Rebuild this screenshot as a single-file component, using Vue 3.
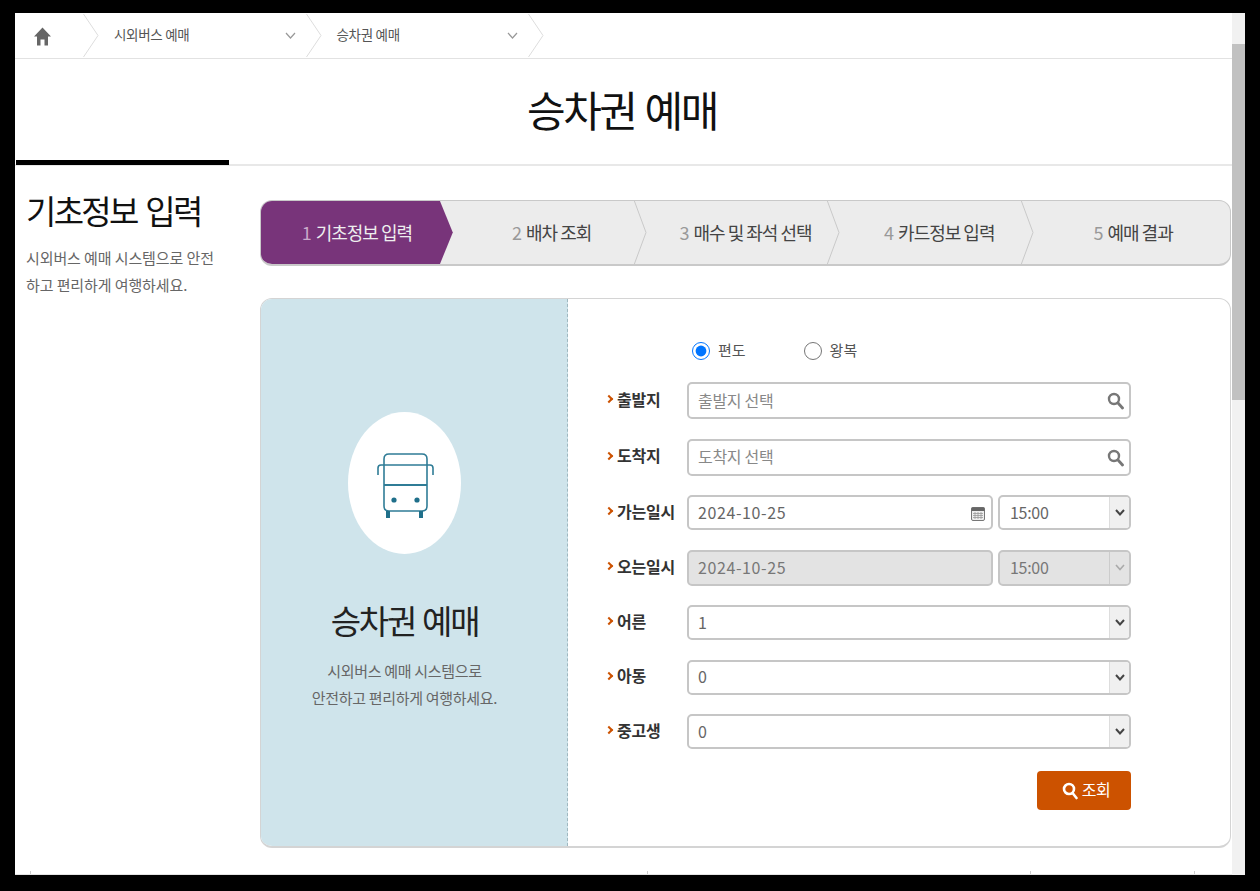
<template>
  <div class="screen">
    <div class="page">
      <!-- 상단 경로 -->
      <nav class="crumbs">
        <a class="crumb-home">
          <svg width="17" height="19" viewBox="0 0 17 19"><path d="M8.5 0.5 L17 9.5 H14 V18.5 H10.5 V12.5 H6.5 V18.5 H3 V9.5 H0 Z" fill="#666" /></svg>
        </a>
        <svg class="crumb-sep" width="16" height="45" viewBox="0 0 16 45"><path d="M0.5 1 L15 22.5 L0.5 44" fill="none" stroke="#ddd" /></svg>
        <template v-for="c in crumbs" :key="c">
          <a class="crumb">
            <span>{{ c }}</span>
            <svg width="11" height="7" viewBox="0 0 11 7"><path d="M1 1 L5.5 6 L10 1" fill="none" stroke="#999" stroke-width="1.2" /></svg>
          </a>
          <svg class="crumb-sep" width="16" height="45" viewBox="0 0 16 45"><path d="M0.5 1 L15 22.5 L0.5 44" fill="none" stroke="#ddd" /></svg>
        </template>
      </nav>

      <header class="title-bar">
        <h1>승차권 예매</h1>
        <div class="title-mark"></div>
      </header>

      <div class="content">
        <aside class="side">
          <h2>기초정보 입력</h2>
          <p>시외버스 예매 시스템으로 안전하고 편리하게 여행하세요.</p>
        </aside>

        <main class="body">
          <ol class="steps">
            <li v-for="(s, i) in steps" :key="s" class="step" :class="{ on: i === 0 }">
              <span class="num">{{ i + 1 }}</span> <span>{{ s }}</span>
              <svg v-if="i > 0 && i < 4" class="step-arrow" width="14" height="65" viewBox="0 0 14 65"><path d="M1 0 L13 32.5 L1 65" fill="none" stroke="#c9c9c9" /></svg>
            </li>
          </ol>

          <section class="card">
            <div class="intro">
              <div class="bus-circle">
                <svg class="bus" width="57" height="66" viewBox="0 0 57 66">
                  <g fill="none" stroke="#2f7c96" stroke-width="1.6">
                    <path d="M7 12 V6 Q7 1 12 1 H45 Q50 1 50 6 V53 Q50 58 45 58 H12 Q7 58 7 53 Z" />
                    <path d="M7 32 H50" stroke-width="2.2" />
                    <path d="M1 22 V15 Q1 12 4 12 H53 Q56 12 56 15 V22" />
                  </g>
                  <circle cx="17" cy="47" r="2.6" fill="#1f6f8a" />
                  <circle cx="40" cy="47" r="2.6" fill="#1f6f8a" />
                  <rect x="9" y="58" width="4" height="7" fill="#1f6f8a" />
                  <rect x="42" y="58" width="4" height="7" fill="#1f6f8a" />
                </svg>
              </div>
              <h3>승차권 예매</h3>
              <p>시외버스 예매 시스템으로<br />안전하고 편리하게 여행하세요.</p>
            </div>

            <form class="form" @submit.prevent>
              <div class="trip">
                <label class="trip-opt"><input type="radio" name="trip" checked /> <span>편도</span></label>
                <label class="trip-opt"><input type="radio" name="trip" /> <span>왕복</span></label>
              </div>

              <div class="row tall">
                <label>출발지</label>
                <div class="field">
                  <input type="text" placeholder="출발지 선택" />
                  <svg class="lens" width="17" height="18" viewBox="0 0 17 18"><circle cx="7" cy="7" r="5" fill="none" stroke="#777" stroke-width="2.4" /><path d="M11 11 L15.5 16" stroke="#777" stroke-width="2.8" stroke-linecap="round" /></svg>
                </div>
              </div>
              <div class="row tall">
                <label>도착지</label>
                <div class="field">
                  <input type="text" placeholder="도착지 선택" />
                  <svg class="lens" width="17" height="18" viewBox="0 0 17 18"><circle cx="7" cy="7" r="5" fill="none" stroke="#777" stroke-width="2.4" /><path d="M11 11 L15.5 16" stroke="#777" stroke-width="2.8" stroke-linecap="round" /></svg>
                </div>
              </div>
              <div class="row">
                <label>가는일시</label>
                <div class="field">
                  <input type="text" value="2024-10-25" />
                  <svg class="cal" width="14" height="15" viewBox="0 0 14 15">
                    <rect x="0.5" y="1.5" width="13" height="13" rx="1.5" fill="#eee" stroke="#777" />
                    <rect x="0.5" y="1.5" width="13" height="3.5" fill="#666" />
                    <path d="M2 7.5 H12 M2 9.5 H12 M2 11.5 H12 M4 6 V13 M7 6 V13 M10 6 V13" stroke="#999" stroke-width="0.8" />
                  </svg>
                </div>
                <div class="field pick time">
                  <select><option>15:00</option></select>
                  <span class="caret"><svg width="10" height="7" viewBox="0 0 10 7"><path d="M1 1 L5 5.5 L9 1" fill="none" stroke="#444" stroke-width="2" /></svg></span>
                </div>
              </div>
              <div class="row mid">
                <label>오는일시</label>
                <div class="field off">
                  <input type="text" value="2024-10-25" disabled />
                </div>
                <div class="field pick time off">
                  <select disabled><option>15:00</option></select>
                  <span class="caret"><svg width="10" height="7" viewBox="0 0 10 7"><path d="M1 1 L5 5.5 L9 1" fill="none" stroke="#aaa" stroke-width="1.6" /></svg></span>
                </div>
              </div>
              <div v-for="p in people" :key="p.label" class="row">
                <label>{{ p.label }}</label>
                <div class="field pick">
                  <select><option>{{ p.value }}</option></select>
                  <span class="caret"><svg width="10" height="7" viewBox="0 0 10 7"><path d="M1 1 L5 5.5 L9 1" fill="none" stroke="#444" stroke-width="2" /></svg></span>
                </div>
              </div>

              <div class="actions">
                <button type="submit">
                  <svg width="16" height="18" viewBox="0 0 16 18"><circle cx="7" cy="7" r="5" fill="none" stroke="#fff" stroke-width="2.6" /><path d="M10.5 11 L14.5 16" stroke="#fff" stroke-width="2.6" stroke-linecap="round" /></svg>
                  <span>조회</span>
                </button>
              </div>
            </form>
          </section>
        </main>
      </div>

      <div class="table-edge">
        <span class="tick" v-for="w in ticks" :key="w" :style="{ width: w + 'px' }"></span>
      </div>
    </div>
    <div class="scrollbar"><div class="thumb"></div></div>
  </div>
</template>

<script setup>
const crumbs = ["시외버스 예매", "승차권 예매"];
const steps = ["기초정보 입력", "배차 조회", "매수 및 좌석 선택", "카드정보 입력", "예매 결과"];
const people = [
  { label: "어른", value: "1" },
  { label: "아동", value: "0" },
  { label: "중고생", value: "0" },
];
// 잘려 보이는 아래 표의 칸 너비
const ticks = [616, 382, 163, 20];
</script>

<style>
html,
body {
  margin: 0;
  background: #000;
}
</style>

<style scoped>
.screen {
  display: flex;
  box-sizing: border-box;
  width: 1260px;
  height: 891px;
  padding: 13px 15px 16px;
  overflow: hidden;
  background: #000;
  font-family: "Noto Sans CJK KR", "Noto Sans", sans-serif;
  color: #222;
}

.page {
  display: flex;
  flex-direction: column;
  flex: 1;
  min-width: 0;
  background: #fff;
  overflow: hidden;
}

/* 상단 경로 */
.crumbs {
  display: flex;
  flex: none;
  align-items: center;
  height: 46px;
  box-sizing: border-box;
  border-bottom: 1px solid #e2e2e2;
}

.crumb-home {
  display: flex;
  align-items: center;
  width: 68px;
  padding: 2px 0 0 19px;
  box-sizing: border-box;
}

.crumb-sep {
  flex: none;
}

.crumb {
  display: flex;
  align-items: center;
  justify-content: space-between;
  box-sizing: border-box;
  width: 206.5px;
  padding: 0 10px 0 15px;
  font-size: 13.5px;
  letter-spacing: -0.3px;
  color: #555;
}

.crumb span {
  padding-bottom: 3px;
}

/* 제목 */
.title-bar {
  position: relative;
  flex: none;
  height: 107px;
  padding-right: 3px;
  border-bottom: 2px solid #e8e8e8;
  box-sizing: border-box;
  text-align: center;
}

.title-bar h1 {
  margin: 0;
  padding-top: 20px;
  font-size: 42px;
  line-height: 60px;
  font-weight: 400;
  letter-spacing: -2.4px;
  word-spacing: 2px;
  color: #111;
}

.title-mark {
  position: absolute;
  left: 1px;
  bottom: -1px;
  width: 213px;
  height: 5px;
  background: #000;
}

.content {
  display: flex;
  flex: none;
}

/* 왼쪽 안내 */
.side {
  flex: none;
  box-sizing: border-box;
  width: 245px;
  padding: 21px 42px 0 11px;
}

.side h2 {
  margin: 0;
  font-size: 33px;
  line-height: 46px;
  font-weight: 400;
  letter-spacing: -2.7px;
  word-spacing: 4px;
  color: #111;
  white-space: nowrap;
}

.side p {
  margin: 11px 0 0;
  font-size: 15px;
  line-height: 27px;
  letter-spacing: -0.1px;
  word-break: break-all;
  color: #666;
}

.body {
  flex: none;
  width: 971px;
  padding-top: 34px;
}

/* 단계 */
.steps {
  display: grid;
  grid-template-columns: repeat(5, 1fr);
  height: 66px;
  margin: 0;
  padding: 0;
  list-style: none;
  box-sizing: border-box;
  border: 1px solid #c9c9c9;
  border-bottom-width: 2px;
  border-radius: 12px;
  background: #ececec;
  overflow: hidden;
}

.step {
  position: relative;
  display: flex;
  align-items: center;
  justify-content: center;
  gap: 5px;
  padding-bottom: 2px;
  box-sizing: border-box;
  font-size: 18px;
  letter-spacing: -1px;
  color: #444;
  white-space: nowrap;
}

.step .num {
  color: #999;
}

.step.on {
  margin-right: 2px;
  background: #78347a;
  clip-path: polygon(0 0, 93.3% 0, 100% 50%, 93.3% 100%, 0 100%);
  color: #eee;
}

.step.on .num {
  color: #c9a9ca;
}

.step-arrow {
  position: absolute;
  right: 2px;
  top: -1px;
}

/* 본문 카드 */
.card {
  display: flex;
  box-sizing: border-box;
  height: 550px;
  margin-top: 32px;
  border: 1px solid #d4d4d4;
  border-bottom-width: 2px;
  border-radius: 12px;
  overflow: hidden;
}

.intro {
  flex: none;
  display: flex;
  flex-direction: column;
  align-items: center;
  box-sizing: border-box;
  width: 307px;
  padding: 113px 19px 0 0;
  background: #cfe4eb;
  border-right: 1px dashed #9fb8c0;
  text-align: center;
}

.bus-circle {
  display: flex;
  align-items: center;
  justify-content: center;
  width: 113px;
  height: 142px;
  border-radius: 50%;
  background: #fff;
}

.bus {
  margin: 6px 0 0 1px;
}

.intro h3 {
  margin: 42px 0 0;
  font-size: 33px;
  line-height: 48px;
  font-weight: 400;
  letter-spacing: -2.3px;
  word-spacing: 2px;
  color: #222;
}

.intro p {
  margin: 13px 0 0;
  font-size: 15px;
  line-height: 27px;
  letter-spacing: -0.3px;
  color: #666;
}

/* 입력 폼 */
.form {
  flex: 1;
  display: flex;
  flex-direction: column;
  gap: 19.5px;
  padding: 41px 99px 0 38px;
}

.trip {
  display: flex;
  height: 22.5px;
  margin-left: 86px;
  gap: 58px;
}

.trip-opt {
  display: flex;
  align-items: center;
  gap: 8px;
  font-size: 15px;
  color: #555;
}

.trip-opt span {
  padding-bottom: 4px;
}

.trip-opt input {
  width: 18px;
  height: 18px;
  margin: 0;
}

.row {
  display: flex;
  align-items: center;
  gap: 5px;
  height: 35px;
}

.row.tall {
  height: 37px;
}

.row.mid {
  height: 36px;
}

.row label {
  flex: none;
  display: flex;
  align-items: center;
  width: 76px;
  padding-bottom: 4px;
  box-sizing: border-box;
  font-size: 16px;
  font-weight: 700;
  letter-spacing: -0.2px;
  color: #333;
  white-space: nowrap;
}

.row label::before {
  content: "";
  flex: none;
  box-sizing: border-box;
  width: 6px;
  height: 6px;
  margin: 1px 5px 0 0;
  border-top: 2px solid #cc5200;
  border-right: 2px solid #cc5200;
  transform: rotate(45deg);
}

.field {
  position: relative;
  flex: 1;
  display: flex;
  height: 100%;
  min-width: 0;
}

.field.time {
  flex: none;
  width: 133px;
}

.field input,
.field select {
  flex: 1;
  width: 100%;
  height: 100%;
  box-sizing: border-box;
  padding: 0 9px 2px;
  border: 2px solid #c6c6c6;
  border-radius: 5px;
  background: #fff;
  font-family: inherit;
  font-size: 16px;
  letter-spacing: 0.6px;
  color: #666;
  outline: none;
  appearance: none;
}

.field.time select {
  padding-left: 10px;
  letter-spacing: -0.3px;
}

.field input::placeholder {
  color: #888;
  opacity: 1;
  letter-spacing: -0.3px;
}

.field.off input,
.field.off select {
  background: #e3e3e3;
  opacity: 1;
  color: #777;
}

.lens {
  position: absolute;
  right: 7px;
  top: 10px;
}

.cal {
  position: absolute;
  right: 8px;
  top: 11px;
}

.caret {
  position: absolute;
  right: 2px;
  top: 2px;
  bottom: 2px;
  display: flex;
  align-items: center;
  justify-content: center;
  width: 19px;
  border-left: 1px solid #ddd;
  border-radius: 0 3px 3px 0;
  background: #f0f0f0;
}

.off .caret {
  border-left-color: #ccc;
  background: #e3e3e3;
}

.actions {
  display: flex;
  justify-content: flex-end;
  margin-top: 2.5px;
}

.actions button {
  display: flex;
  align-items: center;
  justify-content: center;
  gap: 4px;
  width: 94px;
  height: 39px;
  padding: 0 0 0 4px;
  border: 0;
  border-radius: 4px;
  background: #cc5200;
  font-family: inherit;
  font-size: 16px;
  letter-spacing: -0.5px;
  color: #fff;
}

.actions button span {
  padding-bottom: 4px;
}

/* 아래 표 상단선 */
.table-edge {
  display: flex;
  flex: none;
  height: 3px;
  margin-top: 23px;
  border-bottom: 1px solid #e4e4e4;
  padding-left: 15px;
}

.tick {
  height: 3px;
  border-left: 1px solid #ccc;
}

/* 스크롤바 */
.scrollbar {
  flex: none;
  width: 13px;
  padding-top: 31px;
  background: #f1f1f1;
}

.thumb {
  height: 356px;
  background: #c1c1c1;
}
</style>
